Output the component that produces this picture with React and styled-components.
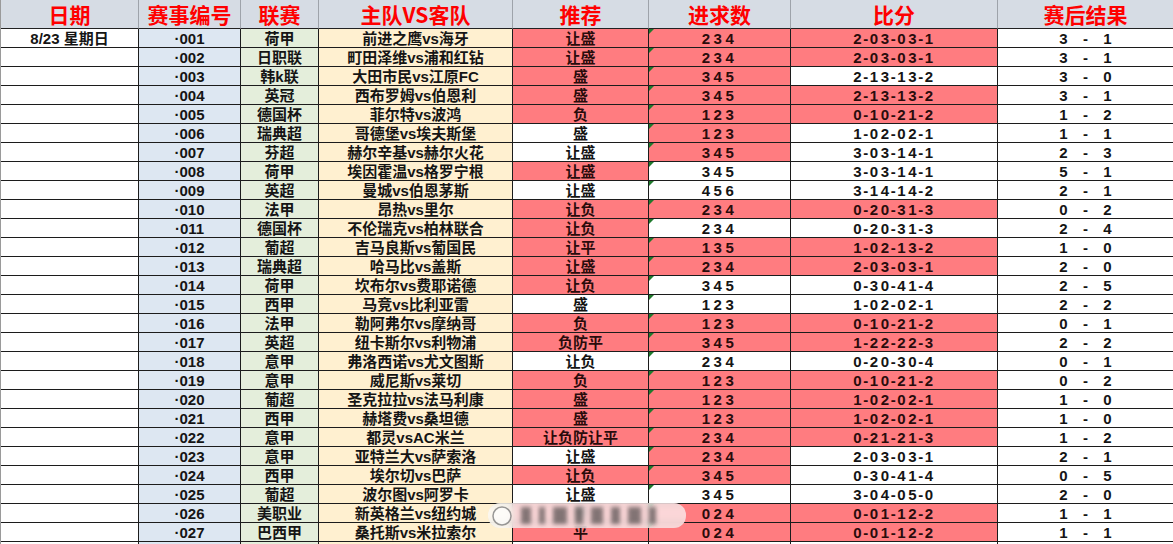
import React from "react";
import styled, { createGlobalStyle } from "styled-components";

const GlobalStyle = createGlobalStyle`
  html, body {
    margin: 0;
    padding: 0;
    background: #fff;
    overflow: hidden;
  }
  body {
    font-family: "Liberation Sans", "Noto Sans CJK SC", sans-serif;
  }
`;

const COLS = "138px 102px 78px 194px 136px 142px 207px 176px";

const Sheet = styled.div`
  position: relative;
  width: 1173px;
  display: flex;
  flex-direction: column;
  border-left: 1px solid #9a9a9a;
  box-sizing: border-box;
`;

const Row = styled.div`
  display: grid;
  grid-template-columns: ${COLS};
  height: ${(p) => (p.$head ? "29px" : "19px")};
`;

const HeadCell = styled.div`
  box-sizing: border-box;
  display: flex;
  align-items: center;
  justify-content: center;
  background: #d6dce4;
  border-right: 1px solid #9ea3aa;
  border-bottom: 1px solid #222;
  color: #ff0000;
  font-family: "Noto Sans CJK SC", sans-serif;
  font-weight: 700;
  font-size: 21px;
  line-height: 1;
`;

const bgFor = {
  date: "#ffffff",
  id: "#dde7f2",
  league: "#e4eedb",
  match: "#fff0d0",
  red: "#ff7c80",
  white: "#ffffff",
};

const Cell = styled.div`
  position: relative;
  box-sizing: border-box;
  display: flex;
  align-items: center;
  justify-content: center;
  gap: ${(p) => p.$gap || "0"};
  background: ${(p) => bgFor[p.$bg] || "#fff"};
  border-right: 1px solid #1c1c1c;
  border-bottom: 1px solid #1c1c1c;
  color: ${(p) => (p.$bg === "red" ? "#2a0c0c" : "#151515")};
  font-family: "Liberation Sans", "Noto Sans CJK SC", sans-serif;
  font-weight: 700;
  font-size: 15px;
  line-height: 1;
  white-space: nowrap;
  letter-spacing: ${(p) => p.$spacing || "0"};
  padding-top: 1px;
`;

const Flag = styled.span`
  position: absolute;
  left: 0;
  top: 0;
  width: 0;
  height: 0;
  border-top: 5px solid #1f7a2c;
  border-right: 5px solid transparent;
`;

const Result = styled.div`
  display: grid;
  grid-template-columns: 16px 16px 16px;
  gap: 6px;
  justify-items: center;
`;

const Watermark = styled.div`
  position: absolute;
  left: 487px;
  top: 503px;
  width: 198px;
  height: 25px;
  display: flex;
  align-items: center;
  gap: 8px;
  padding-left: 3px;
  box-sizing: border-box;
  background: rgba(250, 250, 250, 0.72);
  backdrop-filter: blur(3px);
  border-radius: 12px;
`;

const Stroke = styled.span`
  display: inline-block;
  width: ${(p) => p.$w}px;
  height: 17px;
  background: rgba(50, 50, 50, 0.6);
  filter: blur(2px);
`;

const rows = [
  ["001", "荷甲", "前进之鹰vs海牙", "让盛", 1, "234", 1, "2-0 3-0 3-1", 1, [3, 1]],
  ["002", "日职联", "町田泽维vs浦和红钻", "让盛", 1, "234", 1, "2-0 3-0 3-1", 1, [3, 1]],
  ["003", "韩k联", "大田市民vs江原FC", "盛", 1, "345", 1, "2-1 3-1 3-2", 0, [3, 0]],
  ["004", "英冠", "西布罗姆vs伯恩利", "盛", 1, "345", 1, "2-1 3-1 3-2", 1, [3, 1]],
  ["005", "德国杯", "菲尔特vs波鸿", "负", 1, "123", 1, "0-1 0-2 1-2", 1, [1, 2]],
  ["006", "瑞典超", "哥德堡vs埃夫斯堡", "盛", 0, "123", 1, "1-0 2-0 2-1", 0, [1, 1]],
  ["007", "芬超", "赫尔辛基vs赫尔火花", "让盛", 0, "345", 1, "3-0 3-1 4-1", 0, [2, 3]],
  ["008", "荷甲", "埃因霍温vs格罗宁根", "让盛", 1, "345", 0, "3-0 3-1 4-1", 0, [5, 1]],
  ["009", "英超", "曼城vs伯恩茅斯", "让盛", 0, "456", 0, "3-1 4-1 4-2", 0, [2, 1]],
  ["010", "法甲", "昂热vs里尔", "让负", 1, "234", 1, "0-2 0-3 1-3", 1, [0, 2]],
  ["011", "德国杯", "不伦瑞克vs柏林联合", "让负", 1, "234", 0, "0-2 0-3 1-3", 0, [2, 4]],
  ["012", "葡超", "吉马良斯vs葡国民", "让平", 1, "135", 1, "1-0 2-1 3-2", 1, [1, 0]],
  ["013", "瑞典超", "哈马比vs盖斯", "让盛", 1, "234", 1, "2-0 3-0 3-1", 1, [2, 0]],
  ["014", "荷甲", "坎布尔vs费耶诺德", "让负", 1, "345", 0, "0-3 0-4 1-4", 0, [2, 5]],
  ["015", "西甲", "马竞vs比利亚雷", "盛", 0, "123", 0, "1-0 2-0 2-1", 0, [2, 2]],
  ["016", "法甲", "勒阿弗尔vs摩纳哥", "负", 1, "123", 1, "0-1 0-2 1-2", 1, [0, 1]],
  ["017", "英超", "纽卡斯尔vs利物浦", "负防平", 1, "345", 1, "1-2 2-2 2-3", 1, [2, 2]],
  ["018", "意甲", "弗洛西诺vs尤文图斯", "让负", 0, "234", 0, "0-2 0-3 0-4", 0, [0, 1]],
  ["019", "意甲", "威尼斯vs莱切", "负", 1, "123", 1, "0-1 0-2 1-2", 1, [0, 2]],
  ["020", "葡超", "圣克拉拉vs法马利康", "盛", 1, "123", 1, "1-0 2-0 2-1", 1, [1, 0]],
  ["021", "西甲", "赫塔费vs桑坦德", "盛", 1, "123", 1, "1-0 2-0 2-1", 1, [1, 0]],
  ["022", "意甲", "都灵vsAC米兰", "让负防让平", 1, "234", 1, "0-2 1-2 1-3", 1, [1, 2]],
  ["023", "意甲", "亚特兰大vs萨索洛", "让盛", 0, "234", 1, "2-0 3-0 3-1", 0, [2, 1]],
  ["024", "西甲", "埃尔切vs巴萨", "让负", 1, "345", 1, "0-3 0-4 1-4", 0, [0, 5]],
  ["025", "葡超", "波尔图vs阿罗卡", "让盛", 0, "345", 0, "3-0 4-0 5-0", 0, [2, 0]],
  ["026", "美职业", "新英格兰vs纽约城", "平", 1, "024", 1, "0-0 1-1 2-2", 1, [1, 1]],
  ["027", "巴西甲", "桑托斯vs米拉索尔", "平", 1, "024", 1, "0-0 1-1 2-2", 1, [1, 1]],
];

const headers = ["日期", "赛事编号", "联赛", "主队VS客队", "推荐", "进求数", "比分", "赛后结果"];

const App = () => (
  <>
    <GlobalStyle />
    <Sheet>
      <Row $head>
        {headers.map((h) => (
          <HeadCell key={h}>{h}</HeadCell>
        ))}
      </Row>
      {rows.map((r, i) => (
        <Row key={r[0]}>
          <Cell $bg="date">{i === 0 ? "8/23 星期日" : ""}</Cell>
          <Cell $bg="id">·{r[0]}</Cell>
          <Cell $bg="league">{r[1]}</Cell>
          <Cell $bg="match">{r[2]}</Cell>
          <Cell $bg={r[4] ? "red" : "white"}>{r[3]}</Cell>
          <Cell $bg={r[6] ? "red" : "white"} $spacing="3.5px">
            <Flag />
            {r[5]}
          </Cell>
          <Cell $bg={r[8] ? "red" : "white"} $spacing="1.6px" $gap="1px">
            {r[7].split(" ").map((g, k) => (
              <span key={k}>{g}</span>
            ))}
          </Cell>
          <Cell $bg="white">
            <Result>
              <span>{r[9][0]}</span>
              <span>-</span>
              <span>{r[9][1]}</span>
            </Result>
          </Cell>
        </Row>
      ))}
      <Row>
        <Cell $bg="date" />
        <Cell $bg="id" />
        <Cell $bg="league" />
        <Cell $bg="match" />
        <Cell $bg="white" />
        <Cell $bg="white" />
        <Cell $bg="white" />
        <Cell $bg="white" />
      </Row>
      <Watermark>
        <svg width="22" height="22" viewBox="0 0 22 22">
          <circle cx="11" cy="11" r="9" fill="rgba(255,255,255,0.6)" stroke="rgba(110,110,110,0.7)" strokeWidth="1.5" />
        </svg>
        <Stroke $w={10} />
        <Stroke $w={6} />
        <Stroke $w={14} />
        <Stroke $w={8} />
        <Stroke $w={12} />
        <Stroke $w={9} />
        <Stroke $w={13} />
        <Stroke $w={7} />
      </Watermark>
    </Sheet>
  </>
);

export default App;
